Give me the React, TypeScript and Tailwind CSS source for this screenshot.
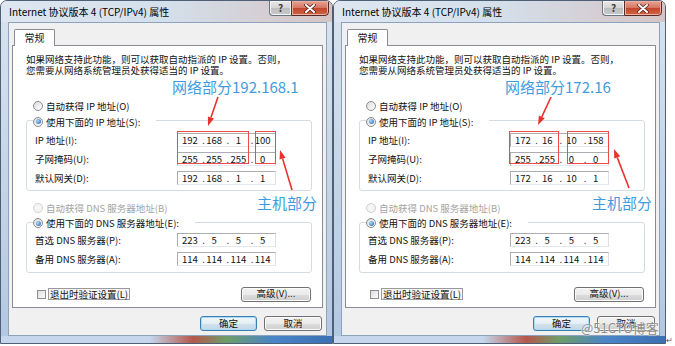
import React from "react";

const font = "font-['Noto_Sans_CJK_SC','Noto_Sans',sans-serif]";

function Radio({checked, disabled}: {checked?: boolean; disabled?: boolean}) {
  return (
    <span
      className={`inline-flex w-[10px] h-[10px] rounded-full border shrink-0 items-center justify-center ${
        disabled
          ? "border-[#cfcfcf] bg-[#f5f5f5]"
          : "border-[#8b8b8b] bg-linear-to-br from-[#dcdcdc] to-[#ffffff]"
      }`}
    >
      {checked && (
        <span className="w-[5px] h-[5px] rounded-full bg-[radial-gradient(circle_at_35%_35%,#a6dcff,#1f5da6)]" />
      )}
    </span>
  );
}

function IpBox({parts}: {parts: string[]}) {
  return (
    <div className="grid grid-cols-4 w-[99px] h-[14px] bg-white border border-[#abadb3] border-r-[#dbdfe6] border-b-[#e3e9ef] text-[9.5px] leading-[12px]">
      {parts.map((p, i) => (
        <div key={i} className="flex items-center">
          <span className="w-[3px]">{i > 0 ? "." : ""}</span>
          <span className="w-[18px] text-center">{p}</span>
        </div>
      ))}
    </div>
  );
}

function Row({label, parts}: {label: string; parts: string[]}) {
  return (
    <div className="flex items-center h-[14px]">
      <span className="ml-[2px] w-[142px]">{label}</span>
      <IpBox parts={parts} />
    </div>
  );
}

function WinButton({label, primary, width}: {label: string; primary?: boolean; width: string}) {
  return (
    <div
      className={`${width} h-[15px] flex items-center justify-center rounded-[3px] border text-[9.5px] leading-none ${
        primary
          ? "border-[#3c7fb1] shadow-[inset_0_0_0_1px_#a8dcf6] bg-[linear-gradient(#f1f7fb,#e5eef5_50%,#d3e2ee_50%,#c4d6e6)]"
          : "border-[#707070] shadow-[inset_0_0_0_1px_#fcfcfc] bg-[linear-gradient(#f2f2f2,#ebebeb_50%,#dddddd_50%,#cfcfcf)]"
      }`}
    >
      {label}
    </div>
  );
}

function Arrow({x1, y1, x2, y2}: {x1: number; y1: number; x2: number; y2: number}) {
  const dx = x2 - x1;
  const dy = y2 - y1;
  const len = Math.hypot(dx, dy);
  const ux = dx / len;
  const uy = dy / len;
  const bx = x2 - ux * 9;
  const by = y2 - uy * 9;
  const px = -uy * 3.2;
  const py = ux * 3.2;
  return (
    <g>
      <line x1={x1} y1={y1} x2={bx} y2={by} stroke="#e8322d" strokeWidth={1.6} />
      <polygon points={`${x2},${y2} ${bx + px},${by + py} ${bx - px},${by - py}`} fill="#e8322d" />
    </g>
  );
}

interface Box {l: number; t: number; w: number; h: number}

interface Props {
  ip: string[];
  mask: string[];
  gw: string[];
  anno: string;
  annoLeft: number;
  hostLeft: number;
  boxes: Box[];
  arrows: number[][];
  watermark?: boolean;
}

function Dialog({ip, mask, gw, anno, annoLeft, hostLeft, boxes, arrows, watermark}: Props) {
  return (
    <div className={`relative w-[333px] h-[344px] shrink-0 ${font} text-[9.5px] leading-[12px] text-[#111]`}>
      <div className="w-full h-full flex flex-col border border-[#4f5f75] rounded-t-[7px] bg-linear-to-b from-[#d9e3ee] to-[#b2c8e1] overflow-hidden">
        {/* title bar */}
        <div className="h-[21px] shrink-0 flex items-start bg-linear-to-r from-[#dee7f1] via-[#d3dfeb] to-[#d5c4c4]">
          <span className="pl-[8px] mt-[4px] text-[10px] leading-[13px] text-black">
            Internet 协议版本 4 (TCP/IPv4) 属性
          </span>
          <div className="ml-auto mr-[3px] flex -mt-px">
            <div className="w-[22px] h-[16px] flex items-center justify-center rounded-bl-[4px] border border-[#6b7280] border-r-0 bg-[linear-gradient(#e9e9e9,#d4d4d4_50%,#bdbdbd_50%,#c9c9c9)] shadow-[inset_0_0_0_1px_#f4f4f4] text-[10px] font-bold text-[#3b3b3b] leading-none">
              ?
            </div>
            <div className="w-[38px] h-[16px] flex items-center justify-center rounded-br-[4px] border border-[#5a2a24] bg-[linear-gradient(#e8a493,#d47560_50%,#c4432f_50%,#d0663f)] shadow-[inset_0_0_0_1px_#eab0a4]">
              <svg width="12" height="9" viewBox="0 0 12 9">
                <path d="M2 1 L10 8 M10 1 L2 8" stroke="#4a1d16" strokeWidth="3.4" strokeLinecap="round" />
                <path d="M2 1 L10 8 M10 1 L2 8" stroke="#ffffff" strokeWidth="2" strokeLinecap="round" />
              </svg>
            </div>
          </div>
        </div>

        {/* client area */}
        <div className="ml-[7px] mr-[5px] flex-1 flex flex-col bg-[#f0f0f0] border border-[#8da2bd]">
          <div className="relative z-10 mt-[6px] ml-[5px] -mb-px w-[41px] h-[17px] flex items-center justify-center bg-white border border-b-0 border-[#898c95] rounded-t-[2px] text-[10px]">
            常规
          </div>
          <div className="mx-[3px] h-[263px] flex flex-col bg-white border border-[#898c95]">
            <div className="mt-[8px] ml-[13px] flex flex-col">
              <span className="h-[11px] leading-[11px]">如果网络支持此功能，则可以获取自动指派的 IP 设置。否则，</span>
              <span className="h-[11px] leading-[11px]">您需要从网络系统管理员处获得适当的 IP 设置。</span>
            </div>

            <div className="mt-[24px] ml-[20px] h-[12px] flex items-center gap-[3px]">
              <Radio />
              <span>自动获得 IP 地址(O)</span>
            </div>

            <fieldset className="mt-[2px] ml-[13px] w-[286px] border border-[#d5dbe2] rounded-[3px] px-[6px] pb-[5px]">
              <legend className="pr-[16px]">
                <span className="inline-flex items-center gap-[3px] h-[12px]">
                  <Radio checked />
                  <span>使用下面的 IP 地址(S):</span>
                </span>
              </legend>
              <div className="mt-[5px] flex flex-col gap-[5px]">
                <Row label="IP 地址(I):" parts={ip} />
                <Row label="子网掩码(U):" parts={mask} />
                <Row label="默认网关(D):" parts={gw} />
              </div>
            </fieldset>

            <div className="mt-[11px] ml-[20px] h-[12px] flex items-center gap-[3px] text-[#a3a3a3]">
              <Radio disabled />
              <span>自动获得 DNS 服务器地址(B)</span>
            </div>

            <fieldset className="mt-[2px] ml-[13px] w-[286px] border border-[#d5dbe2] rounded-[3px] px-[6px] pb-[6px]">
              <legend className="pr-[16px]">
                <span className="inline-flex items-center gap-[3px] h-[12px]">
                  <Radio checked />
                  <span>使用下面的 DNS 服务器地址(E):</span>
                </span>
              </legend>
              <div className="mt-[4px] flex flex-col gap-[5px]">
                <Row label="首选 DNS 服务器(P):" parts={["223", "5", "5", "5"]} />
                <Row label="备用 DNS 服务器(A):" parts={["114", "114", "114", "114"]} />
              </div>
            </fieldset>

            <div className="mt-[14px] ml-[24px] mr-[11px] h-[14px] flex items-center">
              <span className="w-[9px] h-[9px] border border-[#8e8f8f] bg-linear-to-br from-[#dedede] to-[#fbfbfb]" />
              <span className="ml-[2px] px-px border border-[#9a9a9a] bg-[#f6f6f6] leading-[10px]">
                退出时验证设置(L)
              </span>
              <div className="ml-auto">
                <WinButton label="高级(V)..." width="w-[70px]" />
              </div>
            </div>
          </div>

          <div className="mt-[8px] mr-[4px] flex justify-end gap-[7px]">
            <WinButton label="确定" primary width="w-[57px]" />
            <WinButton label="取消" width="w-[58px]" />
          </div>
        </div>

        <div className="h-[7px] shrink-0 bg-[linear-gradient(to_right,#c4d7ec_45%,#b5574a_58%,#6f9d68_68%,#4a86c8_82%,#3b70b2)]" />
      </div>

      {/* annotations */}
      <span className="absolute top-[77px] text-[15px] leading-[20px] text-[#3f9be0]" style={{left: annoLeft}}>
        {anno}
      </span>
      <span className="absolute top-[193px] text-[15px] leading-[20px] text-[#3f9be0]" style={{left: hostLeft}}>
        主机部分
      </span>
      {boxes.map((b, i) => (
        <div
          key={i}
          className="absolute border border-[#ef4a4a]"
          style={{left: b.l, top: b.t, width: b.w, height: b.h}}
        />
      ))}
      <svg className="absolute inset-0 pointer-events-none" width="333" height="344">
        {arrows.map((a, i) => (
          <Arrow key={i} x1={a[0]} y1={a[1]} x2={a[2]} y2={a[3]} />
        ))}
      </svg>
      {watermark && (
        <span className="absolute left-[248px] top-[319px] text-[13px] leading-[18px] text-[#8a8a8a] [text-shadow:0_0_2px_#ffffff,0_0_1px_#ffffff]">
          @51CTO博客
        </span>
      )}
    </div>
  );
}

export default function App() {
  return (
    <div className="w-[675px] h-[346px] bg-white flex">
      <Dialog
        ip={["192", "168", "1", "100"]}
        mask={["255", "255", "255", "0"]}
        gw={["192", "168", "1", "1"]}
        anno="网络部分192.168.1"
        annoLeft={172}
        hostLeft={257}
        boxes={[
          {l: 177, t: 131, w: 72, h: 33},
          {l: 255, t: 131, w: 21, h: 33},
        ]}
        arrows={[
          [218, 97, 208, 126],
          [292, 190, 280, 150],
        ]}
      />
      <Dialog
        ip={["172", "16", "10", "158"]}
        mask={["255", "255", "0", "0"]}
        gw={["172", "16", "10", "1"]}
        anno="网络部分172.16"
        annoLeft={172}
        hostLeft={259}
        boxes={[
          {l: 176, t: 131, w: 50, h: 33},
          {l: 234, t: 131, w: 42, h: 33},
        ]}
        arrows={[
          [218, 97, 205, 125],
          [296, 188, 281, 149],
        ]}
        watermark
      />
      <span className={`self-end mb-[2px] text-[8px] leading-none text-[#555] ${font}`}>↵</span>
    </div>
  );
}
